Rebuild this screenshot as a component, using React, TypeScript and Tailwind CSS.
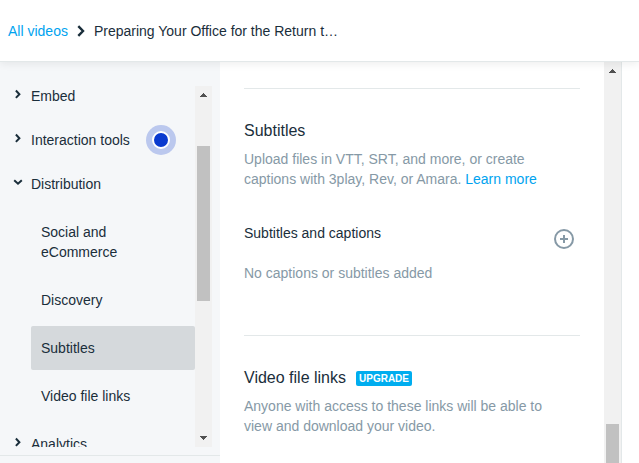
import * as React from 'react';
import clsx from 'clsx';

const DISTRIBUTION_LINKS = ['Social and eCommerce', 'Discovery', 'Subtitles', 'Video file links'];

function Chevron({ open = false }: { open?: boolean }) {
    return (
        <svg width="10" height="16" viewBox="0 0 10 16" className="shrink-0" fill="none" stroke="currentColor" strokeWidth="2" aria-hidden="true">
            <path d={open ? 'M1.2 6.2 5 9.7 8.8 6.2' : 'M2.9 4.5 6.4 8.2 2.9 11.9'} />
        </svg>
    );
}

function Arrow({ down = false }: { down?: boolean }) {
    return (
        <svg width="17" height="17" viewBox="0 0 17 17" className="shrink-0" fill="#505050" shapeRendering="crispEdges" aria-hidden="true">
            <path d={down ? 'M5 6h7v1h-1v1h-1v1h-1v1h-1v-1h-1v-1h-1v-1h-1z' : 'M8 7h1v1h1v1h1v1h1v1h-7v-1h1v-1h1v-1h1z'} />
        </svg>
    );
}

interface NavGroupProps {
    label: string;
    open?: boolean;
    hint?: boolean;
    children?: React.ReactNode;
}

function NavGroup({ label, open, hint, children }: NavGroupProps) {
    return (
        <li>
            <div className="flex h-11 items-center gap-4">
                <button type="button" aria-expanded={!!open} className="flex items-start gap-2 text-left">
                    <Chevron open={open} />
                    {label}
                </button>
                {hint && (
                    <span className="flex size-[30px] items-center justify-center rounded-full bg-[#bbc8ee]">
                        <span className="size-[18px] rounded-full border-2 border-white bg-[#0a3acf]" />
                    </span>
                )}
            </div>
            {children}
        </li>
    );
}

function Section({ title, badge, children }: { title: string; badge?: string; children: React.ReactNode }) {
    return (
        <section className="border-t border-[#e3e8e9] pt-[30px]">
            <div className="flex items-center gap-2.5">
                <h2 className="text-base leading-6">{title}</h2>
                {badge && (
                    <span className="rounded-xs bg-[#00adef] px-[3px] text-[10px] leading-[15px] font-bold text-white">{badge}</span>
                )}
            </div>
            {children}
        </section>
    );
}

export default function App() {
    return (
        <div className="flex h-screen flex-col bg-white font-['Liberation_Sans',Arial,sans-serif] text-sm leading-5 text-[#1a2e3b]">
            <header className="relative z-10 flex h-[62px] shrink-0 items-center gap-2 border-b border-[#e3e8e9] px-2 shadow-[0_2px_8px_rgba(0,0,0,0.07)]">
                <a href="#videos" className="text-[#00a3ef]">All videos</a>
                <svg width="10" height="12" viewBox="0 0 10 12" fill="none" stroke="currentColor" strokeWidth="2.4" aria-hidden="true">
                    <path d="M2.3 1.2 7 6 2.3 10.8" />
                </svg>
                <h1>Preparing Your Office for the Return t…</h1>
            </header>

            <div className="flex min-h-0 flex-1">
                <aside className="flex w-[220px] shrink-0 flex-col bg-[#f5f7f9] pt-6">
                    <div className="flex min-h-0 flex-1 pr-2">
                        <nav className="min-w-0 flex-1 overflow-hidden pl-[13px]">
                            <ul className="-mt-3">
                                <NavGroup label="Embed" />
                                <NavGroup label="Interaction tools" hint />
                                <NavGroup label="Distribution" open>
                                    <ul className="flex flex-col gap-1 py-1 pl-[18px]">
                                        {DISTRIBUTION_LINKS.map(link => (
                                            <li key={link}>
                                                <a
                                                    href="#settings"
                                                    className={clsx('block rounded-xs py-3 pr-10 pl-2.5', link === 'Subtitles' && 'bg-[#d5d9dc]')}
                                                >
                                                    {link}
                                                </a>
                                            </li>
                                        ))}
                                    </ul>
                                </NavGroup>
                                <NavGroup label="Analytics" />
                            </ul>
                        </nav>
                        <div className="flex w-[17px] flex-col bg-[#f1f1f1]">
                            <Arrow />
                            <div className="mx-0.5 mt-[43px] h-[155px] bg-[#c1c1c1]" />
                            <div className="flex-1" />
                            <Arrow down />
                        </div>
                    </div>
                    <div className="mt-2 h-2 shrink-0 border-t border-[#e3e8e9]" />
                </aside>

                <main className="min-w-0 flex-1 overflow-hidden px-6 pt-[26px]">
                    <Section title="Subtitles">
                        <p className="mt-1.5 pr-4 text-[#8699a6]">
                            Upload files in VTT, SRT, and more, or create captions with 3play, Rev, or Amara.{' '}
                            <a href="#learn" className="text-[#00a3ef]">Learn more</a>
                        </p>
                        <div className="mt-[34px] flex items-start justify-between">
                            <h3>Subtitles and captions</h3>
                            <button type="button" aria-label="Add subtitles" className="mt-1 mr-1 text-[#8699a6]">
                                <svg width="24" height="24" viewBox="0 0 24 24" fill="none" stroke="currentColor" strokeWidth="2" aria-hidden="true">
                                    <circle cx="12" cy="12" r="9" />
                                    <path d="M12 8v8M8 12h8" />
                                </svg>
                            </button>
                        </div>
                        <p className="mt-3 pb-[52px] text-[#8699a6]">No captions or subtitles added</p>
                    </Section>
                    <Section title="Video file links" badge="UPGRADE">
                        <p className="mt-1.5 pr-4 text-[#8699a6]">Anyone with access to these links will be able to view and download your video.</p>
                    </Section>
                </main>

                <div className="flex w-[18px] shrink-0 flex-col border-r border-[#e3e8e9] bg-[#f1f1f1]">
                    <Arrow />
                    <div className="flex-1" />
                    <div className="mx-0.5 h-[39px] bg-[#c1c1c1]" />
                </div>
                <div className="w-[17px] shrink-0" />
            </div>
        </div>
    );
}
